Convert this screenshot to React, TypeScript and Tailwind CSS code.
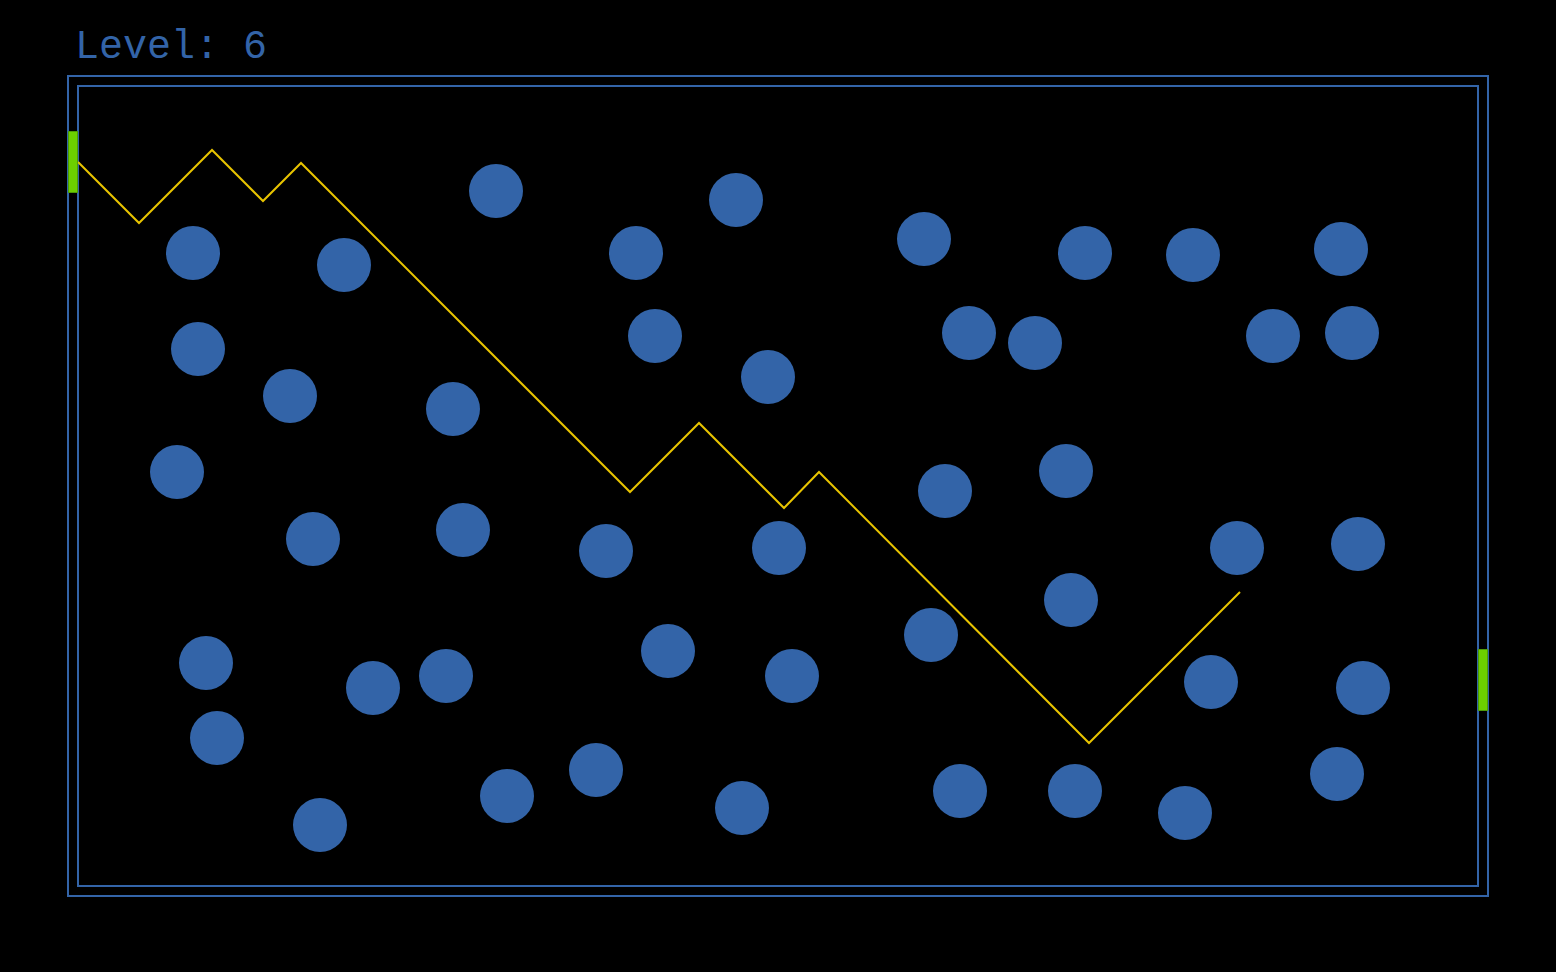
import React from "react";

const circles: [number, number][] = [
  [496, 191], [736, 200], [924, 239], [193, 253], [344, 265], [636, 253],
  [1085, 253], [1193, 255], [1341, 249], [198, 349], [655, 336], [969, 333],
  [1035, 343], [1273, 336], [1352, 333], [768, 377], [290, 396], [453, 409],
  [177, 472], [945, 491], [1066, 471], [313, 539], [463, 530], [606, 551],
  [779, 548], [1237, 548], [1358, 544], [1071, 600], [931, 635], [206, 663],
  [373, 688], [446, 676], [668, 651], [792, 676], [1211, 682], [1363, 688],
  [217, 738], [596, 770], [507, 796], [742, 808], [960, 791], [1075, 791],
  [1185, 813], [1337, 774], [320, 825],
];

const path: [number, number][] = [
  [78, 162], [139, 223], [212, 150], [263, 201], [301, 163], [630, 492],
  [699, 423], [784, 508], [819, 472], [1089, 743], [1240, 592],
];

// origin of the outer box's padding area in page coordinates
const OX = 69;
const OY = 77;

export default function App() {
  return (
    <div className="w-[1556px] h-[972px] bg-black overflow-hidden pt-[28px] pl-[67px]">
      <div
        className="pl-[8px] text-[40px] leading-[40px] text-[#3364a8]"
        style={{ fontFamily: '"Liberation Mono", "Courier New", monospace' }}
      >
        Level: 6
      </div>
      <div className="relative mt-[7px] w-[1422px] h-[822px] border-2 border-[#3364a8] p-[8px]">
        <div className="w-full h-full border-2 border-[#3364a8]" />
        {circles.map(([cx, cy], i) => (
          <div
            key={i}
            className="absolute w-[54px] h-[54px] rounded-full bg-[#3364a8]"
            style={{ left: cx - 27 - OX, top: cy - 27 - OY }}
          />
        ))}
        <svg
          className="absolute left-0 top-0 w-[1418px] h-[818px]"
          viewBox={`${OX} ${OY} 1418 818`}
        >
          <polyline
            points={path.map(([x, y]) => `${x},${y}`).join(" ")}
            fill="none"
            stroke="#e8c400"
            strokeWidth={2}
            strokeLinejoin="miter"
          />
        </svg>
        <div className="absolute left-[-1px] top-[54px] w-[10px] h-[62px] bg-[#6ccf00] border border-[#4e9a06]" />
        <div className="absolute left-[1409px] top-[572px] w-[10px] h-[62px] bg-[#6ccf00] border border-[#4e9a06]" />
      </div>
    </div>
  );
}
